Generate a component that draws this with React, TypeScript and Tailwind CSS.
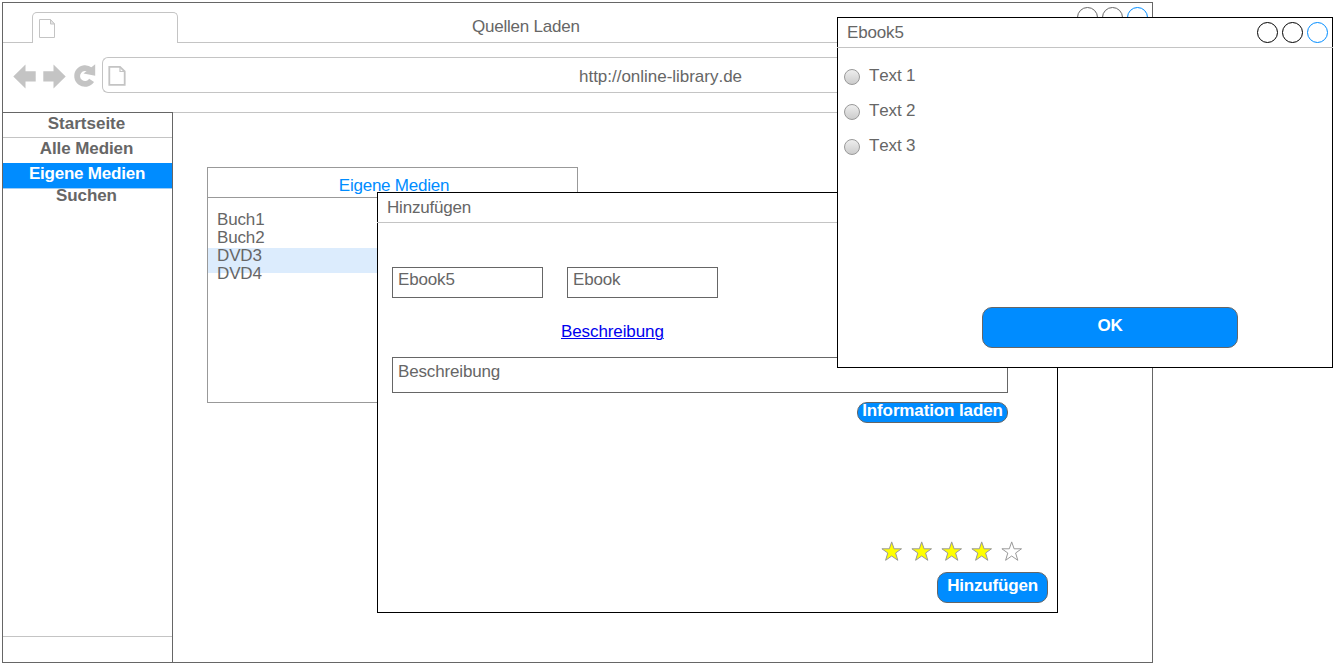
import React from "react";

const sans = "font-['Liberation_Sans',Arial,sans-serif] text-[17px] leading-[20px] tracking-[-0.15px] [font-kerning:none]";

function PageIcon({ size, stroke }: { size: "small" | "large"; stroke: number }) {
  return size === "small" ? (
    <svg width="17" height="20" viewBox="0 0 17 20" fill="none" stroke="#c4c4c4" strokeWidth={stroke} className="block shrink-0">
      <path d="M.5 .5H11.5L15.5 5V18.5H.5Z" />
      <path d="M11.5 .5V5H15.5Z" fill="#e8e8e8" />
    </svg>
  ) : (
    <svg width="18" height="21" viewBox="0 0 18 21" fill="none" stroke="#c4c4c4" strokeWidth={stroke} className="block shrink-0">
      <path d="M1.3 .9H12L16.7 5.5V18.8H1.3Z" />
      <path d="M12 1V5.5H16.5" strokeWidth="1.2" />
    </svg>
  );
}

function WindowControls({ tone }: { tone: "gray" | "black" }) {
  const ring = tone === "gray" ? "#666666" : "#000000";
  return (
    <svg width="72" height="22" viewBox="0 0 72 22" fill="none" className="block shrink-0">
      <circle cx="10.5" cy="10.5" r="10" stroke={ring} />
      <circle cx="35.5" cy="10.5" r="10" stroke={ring} />
      <circle cx="60.5" cy="10.5" r="10" stroke="#008cff" />
    </svg>
  );
}

function BrowserHeader() {
  return (
    <>
      <div className="flex h-10 items-stretch">
        <div className="w-[29px] border-b border-[#c4c4c4]" />
        <div className="mt-[9px] w-[146px] rounded-t-[5px] border border-b-0 border-[#c4c4c4] pl-[6px] pt-[6px]">
          <PageIcon size="small" stroke={1} />
        </div>
        <div className="flex flex-1 justify-between border-b border-[#c4c4c4] pt-1">
          <div className="ml-[294px] mt-[10px] whitespace-nowrap tracking-[-0.22px]">Quellen Laden</div>
          <div className="mr-[3px]">
            <WindowControls tone="gray" />
          </div>
        </div>
      </div>
      <div className="flex h-[69px] pl-[9px] pt-[14px]">
        <svg width="90" height="36" viewBox="0 0 90 36" fill="#c4c4c4" className="block shrink-0">
          <path d="M1.3 19.5 13.5 7.4V14.2H23.7V24.4H13.5V31.5Z" />
          <path d="M53.7 19.5 41.5 7.4V14.2H31.3V24.4H41.5V31.5Z" />
          <path d="M79.6 23.4A7.9 7.9 0 1 1 78.2 13" fill="none" stroke="#c4c4c4" strokeWidth="5.8" />
          <path d="M83.2 7.3V18.8L71.5 16.4Z" />
        </svg>
        <div className="flex h-9 flex-1 items-start rounded-l-[6px] border border-r-0 border-[#c4c4c4] pl-[5px] pt-[8px]">
          <PageIcon size="large" stroke={1.8} />
          <span className="ml-[453px] mt-px whitespace-nowrap tracking-[-0.02px]">http://online-library.de</span>
        </div>
      </div>
    </>
  );
}

function Sidebar() {
  return (
    <nav className="flex w-[170px] flex-col border-r border-t border-[#666] text-center text-[17px] font-bold tracking-[-0.1px]">
      <div className="h-[25px] border-b border-[#c4c4c4] pr-[2px] pt-px tracking-normal">Startseite</div>
      <div className="h-[25px] pr-[2px] pt-px">Alle Medien</div>
      <div className="h-[26px] border-b border-[#9fcdf5] bg-[#008cff] pr-px pt-px tracking-[-0.22px] text-white">Eigene Medien</div>
      <div className="-mt-[3px] flex-1 border-b border-[#c4c4c4] pr-[2px]">Suchen</div>
      <div className="h-[25px]" />
    </nav>
  );
}

function MediaPanel() {
  return (
    <section className="ml-[34px] mt-[54px] h-[236px] w-[371px] border border-[#999]">
      <div className="h-[30px] border-b border-[#999] pl-[3px] pt-[8px] text-center tracking-[-0.24px] text-[#008cff]">Eigene Medien</div>
      <ul className="pt-[13px] leading-[18px]">
        <li className="pl-[9px]">Buch1</li>
        <li className="pl-[9px]">Buch2</li>
        <li className="mt-px h-[25px] bg-[#dcecfd] pl-[9px]">
          <div className="-mt-px inline-block align-top">
            <div>DVD3</div>
            <div>DVD4</div>
          </div>
        </li>
      </ul>
    </section>
  );
}

function Star({ filled }: { filled: boolean }) {
  return (
    <svg width="22" height="21" viewBox="0 0 22 21" className="block">
      <path
        d="M10.7 .9 13.1 7.8H20.5L14.6 12 16.8 19.3 10.7 15 4.6 19.3 6.8 12 .9 7.8H8.3Z"
        fill={filled ? "#ffff00" : "#ffffff"}
        stroke="#999999"
      />
    </svg>
  );
}

function AddDialog() {
  return (
    <section className="absolute left-[377px] top-[192px] h-[421px] w-[681px] border border-black bg-white">
      <div className="-ml-px h-[30px] border-b border-[#c4c4c4] pl-[10px] pt-[5px] tracking-[-0.2px]">Hinzufügen</div>
      <div className="ml-[14px] mt-[44px] flex gap-6">
        <div className="h-[31px] w-[151px] border border-[#666] pl-[5px] pt-[2px]">Ebook5</div>
        <div className="h-[31px] w-[151px] border border-[#666] pl-[5px] pt-[2px]">Ebook</div>
      </div>
      <div className="ml-[183px] mt-[24px] h-[35px]">
        <a className="tracking-[-0.1px] text-[#0000ee] underline decoration-1 underline-offset-1">Beschreibung</a>
      </div>
      <div className="ml-[14px] h-9 w-[616px] border border-[#666] pl-[5px] pt-[4px]">Beschreibung</div>
      <button className="ml-[479px] mt-[9px] block h-[21px] w-[151px] rounded-[10px] border border-[#666] bg-[#008cff] text-[17px] font-bold tracking-[-0.12px] text-white">
        <span className="-mt-[3px] block whitespace-nowrap">Information laden</span>
      </button>
      <div className="ml-[503px] mt-[118px] flex gap-2">
        <Star filled />
        <Star filled />
        <Star filled />
        <Star filled />
        <Star filled={false} />
      </div>
      <button className="ml-[559px] mt-[10px] block h-[31px] w-[111px] rounded-[10px] border border-[#666] bg-[#008cff] text-[17px] font-bold tracking-[-0.18px] text-white">
        <span className="-mt-[3px] block">Hinzufügen</span>
      </button>
    </section>
  );
}

function EbookDialog() {
  return (
    <section className="absolute left-[837px] top-[17px] h-[351px] w-[496px] border border-black bg-white">
      <div className="-ml-px -mr-px flex h-[30px] justify-between border-b border-[#c4c4c4] pl-[10px] pr-1 pt-1">
        <span className="mt-px">Ebook5</span>
        <WindowControls tone="black" />
      </div>
      <div className="flex flex-col gap-[15px] pl-[6px] pt-[18px]">
        {["Text 1", "Text 2", "Text 3"].map((label) => (
          <label key={label} className="flex h-5">
            <span className="mt-[3px] h-4 w-4 rounded-full border border-[#999] bg-linear-to-b from-[#eeeeee] to-[#cccccc]" />
            <span className="ml-[9px]">{label}</span>
          </label>
        ))}
      </div>
      <button className="ml-[144px] mt-[151px] block h-[41px] w-[256px] rounded-[10px] border border-[#666] bg-[#008cff] text-[17px] font-bold text-white">
        <span className="-mt-[3px] block">OK</span>
      </button>
    </section>
  );
}

export default function App() {
  return (
    <main className={`relative h-[664px] w-[1339px] overflow-hidden bg-white text-[#666] ${sans}`}>
      <section className="absolute left-[2px] top-[2px] flex h-[661px] w-[1151px] flex-col border border-[#666]">
        <BrowserHeader />
        <div className="flex flex-1">
          <Sidebar />
          <div className="flex-1 border-t border-[#c4c4c4]">
            <MediaPanel />
          </div>
        </div>
      </section>
      <AddDialog />
      <EbookDialog />
    </main>
  );
}
